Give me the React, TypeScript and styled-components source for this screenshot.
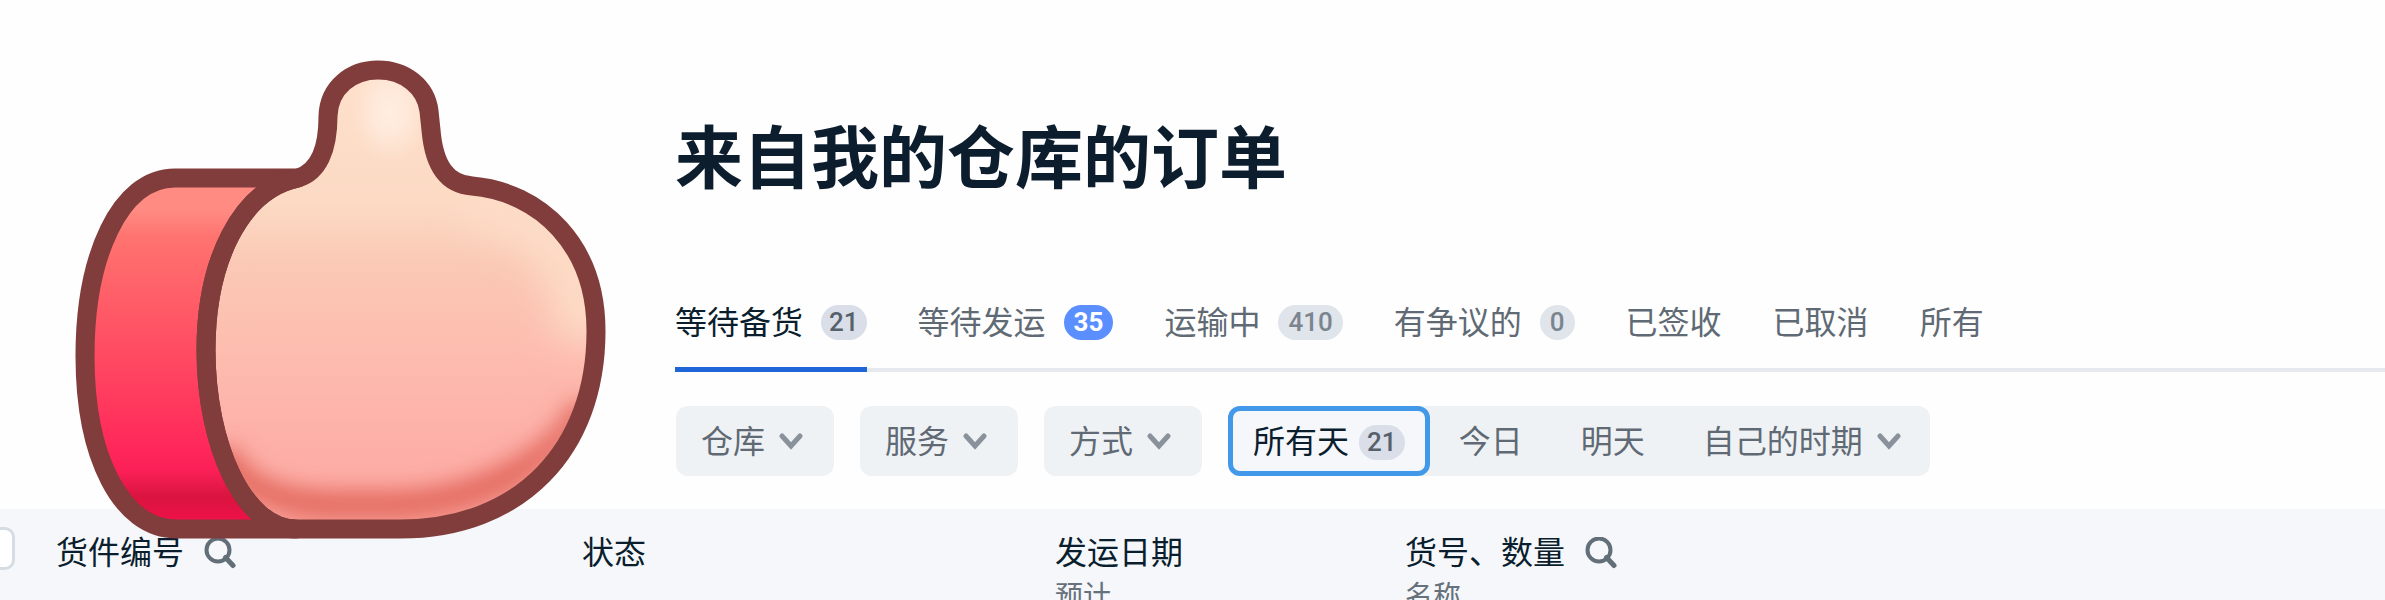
import React from "react";
import styled, { createGlobalStyle, css } from "styled-components";

const GlobalStyle = createGlobalStyle`
  *, *::before, *::after { box-sizing: border-box; }
  body {
    margin: 0;
    background: #fefefe;
    color: #0b1e2d;
    font-family: Roboto, "Noto Sans CJK SC", sans-serif;
    font-size: 32px;
    line-height: 40px;
  }
  button, input { font: inherit; color: inherit; margin: 0; }
`;

const Page = styled.div`
  position: relative;
  height: 100vh;
  overflow: hidden;
`;

const Main = styled.main`
  padding: 110px 0 33px 675px;
`;

const Title = styled.h1`
  margin: 0;
  font-size: 68px;
  line-height: 100px;
  font-weight: 700;
  color: #0c1d2e;
`;

const Tabs = styled.nav`
  display: flex;
  gap: 51px;
  margin-top: 78px;
  border-bottom: 4px solid #e6eaef;
`;

const Tab = styled.a<{ $active?: boolean }>`
  display: flex;
  align-items: center;
  gap: 18px;
  height: 84px;
  margin-bottom: -4px;
  padding-bottom: 10px;
  color: ${(p) => (p.$active ? "#0b1e2d" : "#5f6a74")};
  border-bottom: 5px solid ${(p) => (p.$active ? "#2066d8" : "transparent")};
  text-decoration: none;
  white-space: nowrap;
`;

const Badge = styled.span<{ $tone?: "blue" | "dark" }>`
  height: 35px;
  padding: 0 10px;
  border-radius: 18px;
  font-size: 26px;
  line-height: 35px;
  font-weight: 500;
  background: #e0e4eb;
  color: #7b8590;
  ${(p) =>
    p.$tone === "blue" &&
    css`
      background: #5b8fff;
      color: #fff;
      font-weight: 700;
    `}
  ${(p) =>
    p.$tone === "dark" &&
    css`
      padding: 0 8px;
      background: #d9dee8;
      color: #56616c;
    `}
`;

const Filters = styled.div`
  display: flex;
  gap: 26px;
  margin: 34px 0 0 1px;
`;

const FilterButton = styled.button`
  display: flex;
  align-items: center;
  gap: 14px;
  height: 70px;
  padding: 2px 31px 0 25px;
  border: 0;
  border-radius: 12px;
  background: #eff2f5;
  color: #5f6a74;
  white-space: nowrap;
`;

const Periods = styled.div`
  display: flex;
  border-radius: 12px;
  background: #eff2f5;
`;

const Period = styled(FilterButton)<{ $active?: boolean }>`
  padding: 2px 29px 0;
  background: transparent;
  ${(p) =>
    p.$active &&
    css`
      gap: 10px;
      padding: 2px 20px 0;
      border: 5px solid #4299ea;
      background: #f5f7fb;
      color: #0b1e2d;
    `}
`;

const OrdersTable = styled.table`
  width: 100%;
  table-layout: fixed;
  border-collapse: collapse;
  background: #f5f7fb;
`;

const Column = styled.col<{ $width?: number }>`
  width: ${(p) => (p.$width ? `${p.$width}px` : "auto")};
`;

const HeadCell = styled.th`
  height: 130px;
  padding: 24px 0 20px;
  font-weight: 400;
  text-align: left;
  vertical-align: top;
`;

const CheckCell = styled(HeadCell)`
  padding-top: 18px;
  direction: rtl;
`;

const Checkbox = styled.input`
  appearance: none;
  display: block;
  width: 43px;
  height: 43px;
  margin-right: 41px;
  border: 3px solid #d6dce3;
  border-radius: 10px;
  background: #fff;
`;

const HeadLabel = styled.div`
  display: flex;
  align-items: center;
  gap: 20px;
  white-space: nowrap;
`;

const SubLabel = styled.div`
  margin-top: 4px;
  font-size: 28px;
  line-height: 40px;
  color: #66717b;
`;

const SearchButton = styled.button`
  display: flex;
  padding: 0;
  border: 0;
  background: none;
`;

const ThumbArt = styled.svg`
  position: absolute;
  top: 48px;
  left: 64px;
  pointer-events: none;
`;

const Chevron = () => (
  <svg width="24" height="18" viewBox="0 0 24 18" fill="none" stroke="#89929a" strokeWidth="5" aria-hidden="true">
    <path d="M3 3 L12 13 L21 3" strokeLinecap="round" />
  </svg>
);

const SearchIcon = () => (
  <svg width="32" height="32" viewBox="0 0 32 32" fill="none" stroke="#626e78" strokeWidth="4" aria-hidden="true">
    <circle cx="14" cy="13" r="11.5" />
    <path d="M21.5 20.5 L29 28.5" strokeWidth="5" strokeLinecap="round" />
  </svg>
);

const HAND =
  "M298 178 C240 190 206 262 206 350 C206 445 244 529 296 529 H400 C520 529 596 450 596 331 C596 245 540 192 472 186 C447 184 434 166 431 130 L429 111 C426 87 405 70 378 70 C352 70 329 87 328 116 C328 150 318 172 298 178 Z";
const CUFF =
  "M298 178 H175 C120 178 85 256 85 356 C85 455 120 529 177 529 H296 C244 529 206 445 206 350 C206 262 240 190 298 178 Z";

const Thumb = () => (
  <ThumbArt width="560" height="504" viewBox="64 48 560 504" role="img" aria-label="点赞">
    <defs>
      <linearGradient id="cuff" gradientUnits="userSpaceOnUse" x1="0" y1="187" x2="0" y2="520">
        <stop offset="0" stopColor="#ff8b83" />
        <stop offset="0.07" stopColor="#ff8b83" />
        <stop offset="0.15" stopColor="#ff736f" />
        <stop offset="0.5" stopColor="#ff4b62" />
        <stop offset="0.75" stopColor="#ff2c5b" />
        <stop offset="0.85" stopColor="#fb2058" />
        <stop offset="0.93" stopColor="#d9143f" />
        <stop offset="1" stopColor="#ee1148" />
      </linearGradient>
      <linearGradient id="skin" gradientUnits="userSpaceOnUse" x1="0" y1="79" x2="0" y2="520">
        <stop offset="0" stopColor="#fee0cb" />
        <stop offset="0.28" stopColor="#fcdac4" />
        <stop offset="0.42" stopColor="#fac9b5" />
        <stop offset="0.62" stopColor="#fdbcaf" />
        <stop offset="0.82" stopColor="#fdb0a8" />
        <stop offset="1" stopColor="#fdaaa3" />
      </linearGradient>
      <radialGradient id="glow">
        <stop offset="0" stopColor="#ffeee2" />
        <stop offset="0.4" stopColor="#ffeee2" stopOpacity="0.7" />
        <stop offset="1" stopColor="#ffeee2" stopOpacity="0" />
      </radialGradient>
      <filter id="soft" filterUnits="userSpaceOnUse" x="64" y="48" width="600" height="520">
        <feGaussianBlur stdDeviation="11" />
      </filter>
      <filter id="softer" filterUnits="userSpaceOnUse" x="64" y="48" width="600" height="520">
        <feGaussianBlur stdDeviation="18" />
      </filter>
      <clipPath id="hand">
        <path d={HAND} />
      </clipPath>
    </defs>
    <path d={CUFF} fill="url(#cuff)" />
    <path d={HAND} fill="url(#skin)" />
    <g clipPath="url(#hand)">
      <ellipse cx="390" cy="112" rx="38" ry="50" fill="url(#glow)" />
      <path
        d="M470 195 C545 208 585 262 586 340"
        fill="none"
        stroke="#fddcc6"
        strokeWidth="56"
        filter="url(#softer)"
      />
      <g filter="url(#soft)" fill="none">
        <path d="M222 450 C238 485 272 503 330 504 H400 C480 500 560 460 584 405" stroke="#e2665b" strokeWidth="25" />
        <path d="M275 524 H400 C480 522 550 480 580 430" stroke="#f4948a" strokeWidth="10" />
      </g>
    </g>
    <g fill="none" stroke="#803d3c" strokeWidth="19" strokeLinejoin="round">
      <path d={CUFF} />
      <path d={HAND} />
    </g>
  </ThumbArt>
);

type TabItem = { label: string; count?: number; tone?: "blue" | "dark"; active?: boolean };

const TABS: TabItem[] = [
  { label: "等待备货", count: 21, tone: "dark", active: true },
  { label: "等待发运", count: 35, tone: "blue" },
  { label: "运输中", count: 410 },
  { label: "有争议的", count: 0 },
  { label: "已签收" },
  { label: "已取消" },
  { label: "所有" },
];

export default function App() {
  return (
    <Page>
      <GlobalStyle />
      <Main>
        <Title>来自我的仓库的订单</Title>
        <Tabs>
          {TABS.map((t) => (
            <Tab key={t.label} href="#" $active={t.active}>
              {t.label}
              {t.count !== undefined && <Badge $tone={t.tone}>{t.count}</Badge>}
            </Tab>
          ))}
        </Tabs>
        <Filters>
          {["仓库", "服务", "方式"].map((f) => (
            <FilterButton key={f} type="button">
              {f}
              <Chevron />
            </FilterButton>
          ))}
          <Periods>
            <Period type="button" $active>
              所有天<Badge $tone="dark">21</Badge>
            </Period>
            <Period type="button">今日</Period>
            <Period type="button">明天</Period>
            <Period type="button">
              自己的时期
              <Chevron />
            </Period>
          </Periods>
        </Filters>
      </Main>
      <OrdersTable>
        <colgroup>
          <Column $width={56} />
          <Column $width={526} />
          <Column $width={473} />
          <Column $width={350} />
          <Column />
        </colgroup>
        <thead>
          <tr>
            <CheckCell>
              <Checkbox type="checkbox" aria-label="全选" />
            </CheckCell>
            <HeadCell>
              <HeadLabel>
                货件编号
                <SearchButton type="button" aria-label="搜索货件编号">
                  <SearchIcon />
                </SearchButton>
              </HeadLabel>
            </HeadCell>
            <HeadCell>
              <HeadLabel>状态</HeadLabel>
            </HeadCell>
            <HeadCell>
              <HeadLabel>发运日期</HeadLabel>
              <SubLabel>预计</SubLabel>
            </HeadCell>
            <HeadCell>
              <HeadLabel>
                货号、数量
                <SearchButton type="button" aria-label="搜索货号">
                  <SearchIcon />
                </SearchButton>
              </HeadLabel>
              <SubLabel>名称</SubLabel>
            </HeadCell>
          </tr>
        </thead>
      </OrdersTable>
      <Thumb />
    </Page>
  );
}
